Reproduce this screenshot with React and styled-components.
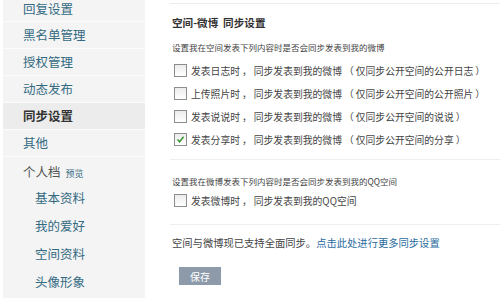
import React from 'react';
import styled, { createGlobalStyle } from 'styled-components';

const GlobalStyle = createGlobalStyle`
    html, body {
        margin: 0;
        padding: 0;
        background: #fff;
        overflow: hidden;
    }
    body {
        font-family: "Noto Sans CJK SC", "Noto Sans", sans-serif;
    }
`;

const Page = styled.div`
    display: flex;
    align-items: flex-start;
    width: 500px;
    height: 298px;
    overflow: hidden;
`;

const Sidebar = styled.div`
    width: 142px;
    height: 298px;
    margin-left: 3px;
    background: #f4f4f4;
    overflow: hidden;
`;

const NavItem = styled.div`
    height: ${p => (p.$first ? 21 : p.$sub ? 28 : 26)}px;
    line-height: ${p => (p.$first ? 18 : p.$sub ? 28 : 26)}px;
    padding-left: ${p => (p.$sub ? 32 : 20)}px;
    font-size: 12.5px;
    color: ${p => (p.$active ? '#333' : '#336a82')};
    font-weight: ${p => (p.$active ? 'bold' : 'normal')};
    background: ${p => (p.$active ? '#ececec' : 'transparent')};
    border-bottom: ${p => (p.$sub ? 'none' : '1px solid #fbfbfb')};
`;

const GroupHead = styled.div`
    height: 27px;
    line-height: 30px;
    padding-left: 20px;
    font-size: 12.5px;
    color: #555;
`;

const Preview = styled.span`
    margin-left: 5px;
    font-size: 9px;
    color: #336a82;
`;

const Content = styled.div`
    flex: 1;
    margin-left: 25px;
    padding-top: 3px;
    color: #444;
`;

const Rule = styled.div`
    border-top: 1px solid #ececec;
`;

const Title = styled.div`
    margin-top: 11px;
    line-height: 16px;
    font-size: 10.6px;
    font-weight: bold;
    color: #333;
    padding-left: 2px;
`;

const Lead = styled.div`
    margin-top: ${p => p.$top}px;
    line-height: 16px;
    padding-left: 2px;
    font-size: ${p => p.$size || 8.5}px;
`;

const OptionList = styled.div`
    margin-top: 4px;
`;

const Row = styled.label`
    display: flex;
    align-items: center;
    height: 23px;
    padding-left: 4px;
    font-size: 9.8px;
`;

const Box = styled.span`
    width: 11px;
    height: 11px;
    margin-right: 4px;
    border: 1px solid #8d8d8d;
    background: linear-gradient(#ececec, #fff);
    display: flex;
    align-items: center;
    justify-content: center;
`;

const Punct = styled.span`
    margin: 0 2px;
`;

const Divider = styled.div`
    margin-top: ${p => p.$top}px;
    border-top: 1px solid #efefef;
`;

const Link = styled.a`
    color: #2a6c9e;
    text-decoration: none;
`;

const Save = styled.button`
    display: block;
    margin: 16px 0 0 9px;
    width: 42px;
    height: 18px;
    border: none;
    padding: 0;
    background: #8c9aaa;
    color: #fff;
    font-family: inherit;
    font-size: 10px;
`;

const Check = () => <svg width="9" height="9" viewBox="0 0 9 9">
    <path d="M1.5 4.5 L3.6 6.8 L7.6 1.8" fill="none" stroke="#3b9b35" strokeWidth="1.6" />
</svg>;

const navItems = [
    { label: '回复设置', first: true },
    { label: '黑名单管理' },
    { label: '授权管理' },
    { label: '动态发布' },
    { label: '同步设置', active: true },
    { label: '其他' }
];

const subItems = ['基本资料', '我的爱好', '空间资料', '头像形象'];

const options = [
    { what: '发表日志时', scope: '仅同步公开空间的公开日志', checked: false },
    { what: '上传照片时', scope: '仅同步公开空间的公开照片', checked: false },
    { what: '发表说说时', scope: '仅同步公开空间的说说', checked: false },
    { what: '发表分享时', scope: '仅同步公开空间的分享', checked: true }
];

const Option = ({ checked, children }) => <Row>
    <Box>{checked && <Check />}</Box>
    <span>{children}</span>
</Row>;

const App = () => {

    return <Page>
        <GlobalStyle />
        <Sidebar>
            {
                navItems.map((item, index) => <NavItem key={index} $first={item.first} $active={item.active}>
                    {item.label}
                </NavItem>)
            }
            <GroupHead>个人档<Preview>预览</Preview></GroupHead>
            {
                subItems.map((label, index) => <NavItem key={index} $sub>{label}</NavItem>)
            }
        </Sidebar>
        <Content>
            <Rule />
            <Title>空间-微博&nbsp;&nbsp;同步设置</Title>
            <Lead $top={8}>设置我在空间发表下列内容时是否会同步发表到我的微博</Lead>
            <OptionList>
                {
                    options.map((opt, index) => <Option key={index} checked={opt.checked}>
                        {opt.what}<Punct>，</Punct>同步发表到我的微博<Punct>（</Punct>{opt.scope}<Punct>）</Punct>
                    </Option>)
                }
            </OptionList>
            <Divider $top={8} />
            <Lead $top={13}>设置我在微博发表下列内容时是否会同步发表到我的QQ空间</Lead>
            <Option>发表微博时<Punct>，</Punct>同步发表到我的QQ空间</Option>
            <Divider $top={12} />
            <Lead $top={10} $size={10.3}>空间与微博现已支持全面同步。<Link href="#">点击此处进行更多同步设置</Link></Lead>
            <Save>保存</Save>
        </Content>
    </Page>;
};

export default App;
